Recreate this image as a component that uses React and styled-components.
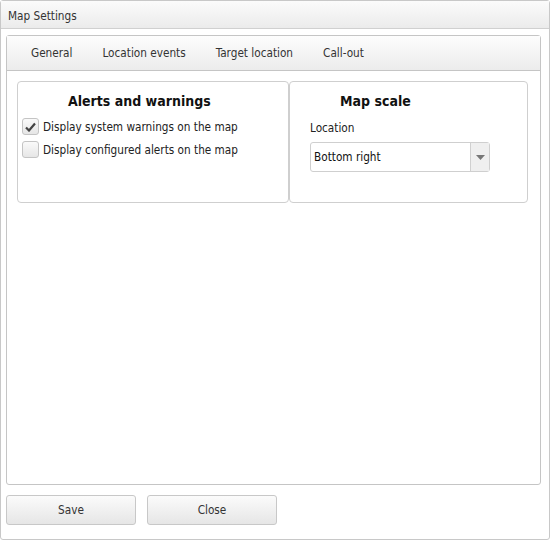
import styled, { createGlobalStyle } from "styled-components"

const Global = createGlobalStyle`
    html, body {
        margin: 0;
        padding: 0;
        background: #fff;
    }
    body {
        font-family: "DejaVu Sans Condensed", "DejaVu Sans", Tahoma, sans-serif;
        font-size: 11.7px;
        color: #222;
    }
`

const Window = styled.div`
    box-sizing: border-box;
    width: 550px;
    height: 540px;
    border: 1px solid #c8c8c8;
    border-radius: 3px;
    display: flex;
    flex-direction: column;
    background: #fff;
`

const TitleBar = styled.div`
    box-sizing: border-box;
    height: 28px;
    border-bottom: 1px solid #d0d0d0;
    background: linear-gradient(#fbfbfb, #ebebeb);
    display: flex;
    align-items: center;
    padding: 2px 0 0 7px;
    color: #333;
`

const Body = styled.div`
    flex: 1;
    display: flex;
    flex-direction: column;
    padding: 6px 8px 14px 5px;
`

const TabPanel = styled.div`
    flex: 1;
    border: 1px solid #c5c5c5;
    border-radius: 3px;
    display: flex;
    flex-direction: column;
`

const TabStrip = styled.div`
    height: 34px;
    border-bottom: 1px solid #c5c5c5;
    background: linear-gradient(#fdfdfd, #ececec);
    display: flex;
    align-items: center;
    padding-left: 9px;
`

const Tab = styled.div`
    padding: 0 15px;
    color: #333;
`

const TabContent = styled.div`
    display: flex;
    padding: 10px 12px 0 10px;
`

const Group = styled.div`
    box-sizing: border-box;
    width: ${(p) => p.$width}px;
    height: 122px;
    border: 1px solid #cfcfcf;
    border-radius: 4px;
    padding: 11px 0 0 4px;
`

const GroupTitle = styled.div`
    font-size: 14px;
    font-weight: bold;
    color: #111;
    padding-left: 46px;
    margin-bottom: 6px;
`

const CheckRow = styled.label`
    display: flex;
    align-items: center;
    gap: 4px;
    height: 23px;
`

const Box = styled.span`
    box-sizing: border-box;
    width: 17px;
    height: 17px;
    border: 1px solid #c4c4c4;
    border-radius: 3px;
    background: linear-gradient(#fafafa, #e6e6e6);
    display: flex;
    align-items: center;
    justify-content: center;
`

const FieldBlock = styled.div`
    padding-left: 16px;
`

const FieldLabel = styled.div`
    margin: 12px 0 7px;
`

const Select = styled.div`
    box-sizing: border-box;
    width: 180px;
    height: 30px;
    border: 1px solid #cfcfcf;
    border-radius: 3px;
    display: flex;
    background: #fff;
`

const SelectValue = styled.div`
    flex: 1;
    display: flex;
    align-items: center;
    padding-left: 3px;
    color: #111;
`

const SelectArrow = styled.div`
    width: 18px;
    border-left: 1px solid #d0d0d0;
    background: #efefef;
    display: flex;
    align-items: center;
    justify-content: center;
`

const Footer = styled.div`
    display: flex;
    gap: 11px;
    padding-top: 10px;
`

const Button = styled.button`
    box-sizing: border-box;
    width: 130px;
    height: 30px;
    border: 1px solid #c8c8c8;
    border-radius: 3px;
    background: linear-gradient(#fbfbfb, #e6e6e6);
    font-family: inherit;
    font-size: 11.7px;
    color: #333;
`

const Check = () => (
    <svg width="11" height="10" viewBox="0 0 11 10">
        <path d="M1 5.5 L4 8.5 L10 1.5" fill="none" stroke="#444" strokeWidth="2.2" />
    </svg>
)

const Arrow = () => (
    <svg width="9" height="5" viewBox="0 0 9 5">
        <path d="M0 0 H9 L4.5 5 Z" fill="#777" />
    </svg>
)

const App = () => {
    return (
        <>
            <Global />
            <Window>
                <TitleBar>Map Settings</TitleBar>
                <Body>
                    <TabPanel>
                        <TabStrip>
                            <Tab>General</Tab>
                            <Tab>Location events</Tab>
                            <Tab>Target location</Tab>
                            <Tab>Call-out</Tab>
                        </TabStrip>
                        <TabContent>
                            <Group $width={272}>
                                <GroupTitle>Alerts and warnings</GroupTitle>
                                <CheckRow>
                                    <Box><Check /></Box>
                                    Display system warnings on the map
                                </CheckRow>
                                <CheckRow>
                                    <Box />
                                    Display configured alerts on the map
                                </CheckRow>
                            </Group>
                            <Group $width={239}>
                                <GroupTitle>Map scale</GroupTitle>
                                <FieldBlock>
                                    <FieldLabel>Location</FieldLabel>
                                    <Select>
                                        <SelectValue>Bottom right</SelectValue>
                                        <SelectArrow><Arrow /></SelectArrow>
                                    </Select>
                                </FieldBlock>
                            </Group>
                        </TabContent>
                    </TabPanel>
                    <Footer>
                        <Button>Save</Button>
                        <Button>Close</Button>
                    </Footer>
                </Body>
            </Window>
        </>
    )
}

export default App
